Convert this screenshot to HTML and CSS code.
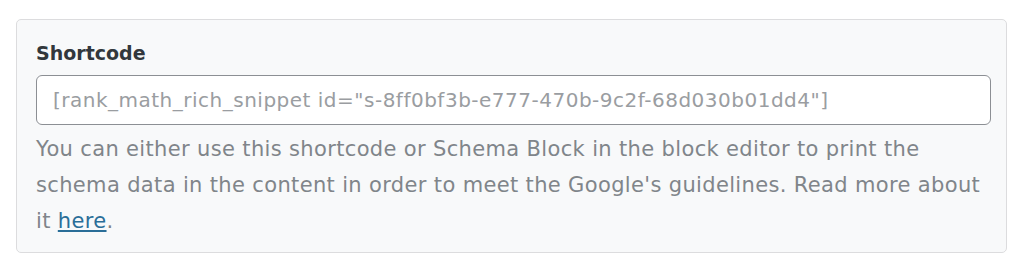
FILE: index.html
```html
<!DOCTYPE html>
<html>
<head>
<meta charset="utf-8">
<link rel="stylesheet" href="styles.css">
</head>
<body>
<div class="panel">
  <label class="label" for="sc">Shortcode</label>
  <input class="field" id="sc" type="text" placeholder='[rank_math_rich_snippet id="s-8ff0bf3b-e777-470b-9c2f-68d030b01dd4"]'>
  <p class="desc">You can either use this shortcode or Schema Block in the block editor to print the schema data in the content in order to meet the Google's guidelines. Read more about it <a href="#" class="link">here</a>.</p>
</div>
</body>
</html>
```
FILE: styles.css
```css
html, body {
  margin: 0;
  padding: 0;
  background: #ffffff;
}
body {
  font-family: "DejaVu Sans", Inter, sans-serif;
}
.panel {
  box-sizing: border-box;
  margin: 19px 0 0 16px;
  width: 991px;
  padding: 19px 16px 13px 19px;
  background: #f8f9fa;
  border: 1px solid #dcdcde;
  border-radius: 5px;
  display: flex;
  flex-direction: column;
}
.label {
  font-size: 19px;
  font-weight: bold;
  line-height: 28px;
  color: #32373c;
}
.field {
  box-sizing: border-box;
  flex-shrink: 0;
  margin-top: 8px;
  width: 955px;
  height: 50px;
  padding: 0 13px 0 16px;
  border: 1px solid #8c8f94;
  border-radius: 6px;
  background: #ffffff;
  font-family: inherit;
  font-size: 20px;
  letter-spacing: 0.5px;
  color: #32373c;
  outline: none;
}
.field::placeholder {
  color: #9a9da1;
  opacity: 1;
}
.desc {
  margin: 6px 0 0 0;
  max-width: 955px;
  font-size: 21px;
  letter-spacing: 0.35px;
  line-height: 36px;
  color: #80858a;
}
.link {
  color: #2a6e98;
  text-decoration: underline;
}
```
